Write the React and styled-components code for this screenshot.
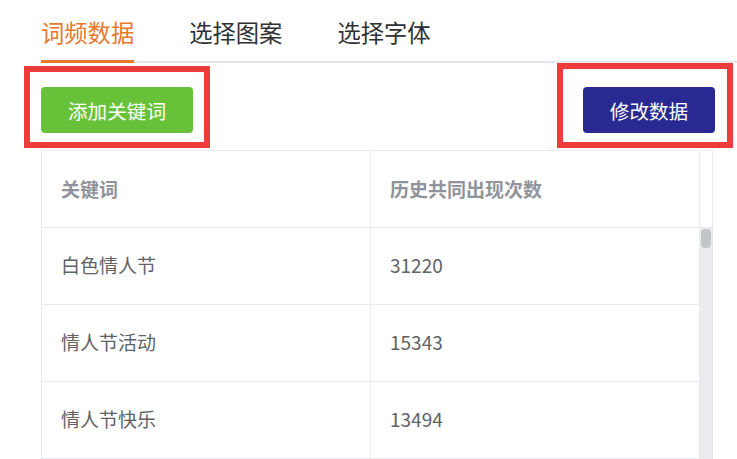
import React, { useState } from 'react';
import styled, { createGlobalStyle } from 'styled-components';

const GlobalStyle = createGlobalStyle`
  body {
    margin: 0;
    background: #fff;
    font-family: "Noto Sans CJK SC", "Microsoft YaHei", sans-serif;
    overflow: hidden;
  }
`;

const rows = [
  { word: '白色情人节', count: 31220 },
  { word: '情人节活动', count: 15343 },
  { word: '情人节快乐', count: 13494 },
];

function App() {
  const [activeTab, setActiveTab] = useState('freq');

  return (
    <Page>
      <GlobalStyle />
      <Tabs>
        <Tab active={activeTab === 'freq'} onClick={() => setActiveTab('freq')}>词频数据</Tab>
        <Tab active={activeTab === 'shape'} onClick={() => setActiveTab('shape')}>选择图案</Tab>
        <Tab active={activeTab === 'font'} onClick={() => setActiveTab('font')}>选择字体</Tab>
      </Tabs>

      <Toolbar>
        <Marked left={17} top={21} right={17} bottom={15}>
          <Button color="#67c23a" width={152}>添加关键词</Button>
        </Marked>
        <Marked left={26} top={24} right={18} bottom={15}>
          <Button color="#2a2991" width={132}>修改数据</Button>
        </Marked>
      </Toolbar>

      <Table>
        <HeadRow>
          <HeadCell>关键词</HeadCell>
          <HeadCell>历史共同出现次数</HeadCell>
          <Gutter />
        </HeadRow>
        <Body>
          <Rows>
            {rows.map((r) => (
              <Row key={r.word}>
                <Cell>{r.word}</Cell>
                <Cell>{r.count}</Cell>
              </Row>
            ))}
          </Rows>
          <Track>
            <Thumb />
          </Track>
        </Body>
      </Table>
    </Page>
  );
}

const Page = styled.div`
  padding-left: 41px;
`;

const Tabs = styled.div`
  display: flex;
  gap: 55px;
  height: 61px;
  border-bottom: 2px solid #e4e7ed;
`;

const Tab = styled.div`
  position: relative;
  display: flex;
  align-items: center;
  padding-top: 3px;
  font-size: 23.3px;
  color: ${(p) => (p.active ? '#e8782c' : '#303133')};
  cursor: pointer;
  &::after {
    content: '';
    position: absolute;
    left: 0;
    right: 0;
    bottom: -2px;
    height: 3px;
    background: ${(p) => (p.active ? '#e8782c' : 'transparent')};
  }
`;

const Toolbar = styled.div`
  width: 674px;
  display: flex;
  justify-content: space-between;
  padding: 24px 0 17px;
`;

const Marked = styled.div`
  position: relative;
  &::before {
    content: '';
    position: absolute;
    left: -${(p) => p.left}px;
    top: -${(p) => p.top}px;
    right: -${(p) => p.right}px;
    bottom: -${(p) => p.bottom}px;
    border: 6px solid #ee3b3b;
    pointer-events: none;
  }
`;

const Button = styled.button`
  display: block;
  width: ${(p) => p.width}px;
  height: 46px;
  border: none;
  border-radius: 4px;
  background: ${(p) => p.color};
  color: #fff;
  font-family: inherit;
  font-size: 19.6px;
  padding: 0;
  cursor: pointer;
`;

const Table = styled.div`
  width: 672px;
  border-top: 1px solid #e9ebf0;
  border-left: 1px solid #e9ebf0;
  box-sizing: border-box;
`;

const HeadRow = styled.div`
  display: grid;
  grid-template-columns: 329px 329px 13px;
  height: 76px;
  border-bottom: 1px solid #e9ebf0;
`;

const HeadCell = styled.div`
  display: flex;
  align-items: center;
  padding-left: 19px;
  padding-bottom: 1px;
  border-right: 1px solid #e9ebf0;
  font-size: 19px;
  font-weight: 700;
  color: #909399;
`;

const Gutter = styled.div`
  border-right: 1px solid #e9ebf0;
`;

const Body = styled.div`
  display: flex;
`;

const Rows = styled.div`
  width: 658px;
`;

const Row = styled.div`
  display: grid;
  grid-template-columns: 329px 329px;
  height: 76px;
  border-bottom: 1px solid #e9ebf0;
`;

const Cell = styled.div`
  display: flex;
  align-items: center;
  padding-left: 19px;
  padding-bottom: 3px;
  border-right: 1px solid #e9ebf0;
  font-size: 19px;
  color: #606266;
`;

const Track = styled.div`
  width: 13px;
  background: #ececef;
  border-right: 1px solid #e4e4e8;
  box-sizing: border-box;
  padding: 1px 1px 0 1px;
`;

const Thumb = styled.div`
  height: 19px;
  border-radius: 4px;
  background: #c4c5c9;
`;

export default App;
